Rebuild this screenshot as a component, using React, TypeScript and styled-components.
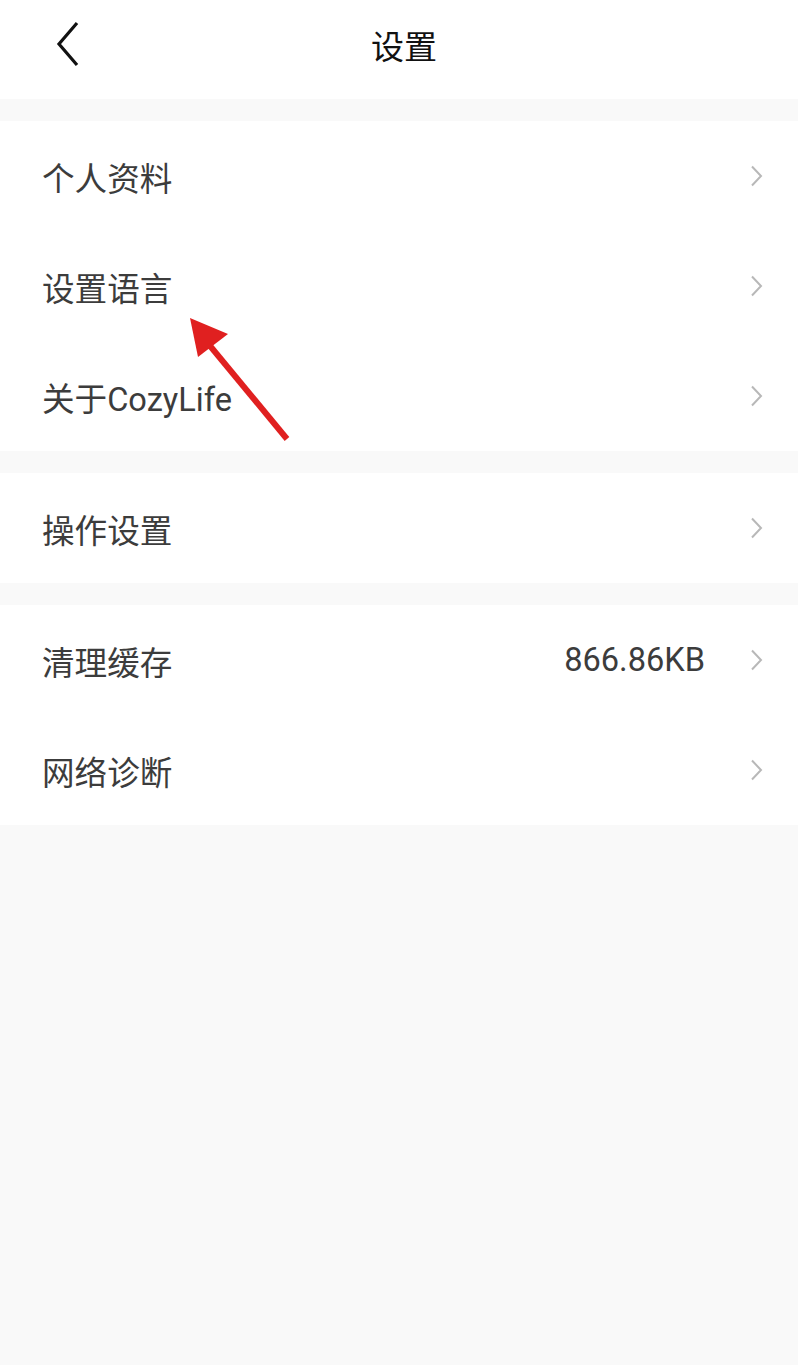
import React from "react";
import styled, { createGlobalStyle } from "styled-components";

const Global = createGlobalStyle`
  html, body { margin: 0; padding: 0; background: #f9f9f9; }
  body { font-family: Roboto, "Noto Sans CJK SC", sans-serif; }
`;

const Page = styled.div`
  position: relative;
  width: 798px;
  min-height: 1365px;
  background: #f9f9f9;
  display: flex;
  flex-direction: column;
  gap: 22px;
`;

const Header = styled.header`
  height: 99px;
  background: #fff;
  display: flex;
  align-items: center;
  justify-content: center;
  position: relative;
  padding-left: 10px;
`;

const BackButton = styled.button`
  position: absolute;
  left: 47px;
  top: 18px;
  width: 40px;
  height: 52px;
  border: 0;
  background: none;
  padding: 0;
  display: flex;
  align-items: center;
  justify-content: center;
`;

const Title = styled.h1`
  margin: 0;
  font-size: 33px;
  font-weight: 400;
  color: #111;
  transform: translateY(-5px);
`;

const Group = styled.section`
  background: #fff;
  display: flex;
  flex-direction: column;
`;

const Row = styled.div`
  height: 110px;
  display: flex;
  align-items: center;
  padding: 0 34px 0 42px;
  gap: 36px;
`;

const Label = styled.span`
  flex: 1;
  font-size: 32.6px;
  color: #3c3c3c;
`;

const Value = styled.span`
  font-size: 32.6px;
  color: #3c3c3c;
  margin-right: 9px;
`;

const Arrow = styled.svg`
  position: absolute;
  left: 180px;
  top: 310px;
  pointer-events: none;
`;

const Chevron = () => (
  <svg width="14" height="22" viewBox="0 0 14 22">
    <path d="M2 1.5 L11 11 L2 20.5" fill="none" stroke="#b8b8b8" strokeWidth="2" />
  </svg>
);

const items = [
  [{ label: "个人资料" }, { label: "设置语言" }, { label: "关于CozyLife" }],
  [{ label: "操作设置" }],
  [{ label: "清理缓存", value: "866.86KB" }, { label: "网络诊断" }],
];

export default function App() {
  return (
    <Page>
      <Global />
      <Header>
        <BackButton aria-label="back">
          <svg width="28" height="46" viewBox="0 0 28 46">
            <path d="M24 2 L6 23 L24 44" fill="none" stroke="#111" strokeWidth="3.2" />
          </svg>
        </BackButton>
        <Title>设置</Title>
      </Header>
      {items.map((group, gi) => (
        <Group key={gi}>
          {group.map((it) => (
            <Row key={it.label}>
              <Label>{it.label}</Label>
              {"value" in it && it.value ? <Value>{it.value}</Value> : null}
              <Chevron />
            </Row>
          ))}
        </Group>
      ))}
      <Arrow width="120" height="140" viewBox="0 0 120 140">
        <path d="M107 129 L26 31" stroke="#e02020" strokeWidth="6" strokeLinecap="butt" />
        <polygon points="10,8 48,24 18,47" fill="#e02020" />
      </Arrow>
    </Page>
  );
}
